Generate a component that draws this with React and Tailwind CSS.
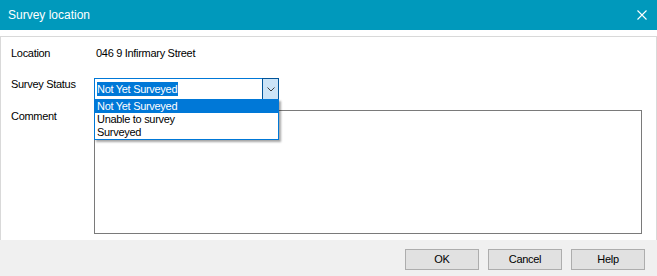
import React from "react";

export default function App() {
  const font = { fontFamily: '"Liberation Sans", Arial, sans-serif' };
  return (
    <div
      className="w-[657px] h-[276px] flex flex-col bg-white overflow-hidden text-[11px] tracking-[-0.3px] text-black"
      style={font}
    >
      {/* Title bar */}
      <div className="h-[30px] shrink-0 bg-[#0099bc] flex items-center justify-between pl-[8px] pr-[10px]">
        <span className="text-white text-[12px] tracking-normal">Survey location</span>
        <svg width="10" height="10" viewBox="0 0 10 10" className="mr-[0px]">
          <path d="M0.5 0.5 L9.5 9.5 M9.5 0.5 L0.5 9.5" stroke="white" strokeWidth="1.1" fill="none" />
        </svg>
      </div>
      <div className="h-[6px] shrink-0 bg-white" />
      {/* Content */}
      <div className="flex-1 border-t border-l border-r border-[#d9d9d9] bg-white pl-[10px] pt-[10px] flex flex-col">
        <div className="flex h-[13px] leading-[13px]">
          <div className="w-[83px]">Location</div>
          <div className="pl-[2px]">046 9 Infirmary Street</div>
        </div>
        <div className="flex mt-[18px] h-[22px]">
          <div className="w-[83px] leading-[13px]">Survey Status</div>
          <div className="relative w-[185px] h-[22px] border border-[#0078d7] bg-white flex">
            <div className="flex-1 pl-[2px] pt-[2px]">
              <span className="inline-block bg-[#0078d7] text-white leading-[14px] h-[14px] pr-[1px]">
                Not Yet Surveyed
              </span>
            </div>
            <div className="w-[17px] -mt-px -mr-px -mb-px bg-[#cce4f7] border border-[#005499] flex items-center justify-center">
              <svg width="8" height="5" viewBox="0 0 8 5">
                <path d="M0.5 0.5 L4 4 L7.5 0.5" stroke="#404040" strokeWidth="1" fill="none" />
              </svg>
            </div>
            {/* Dropdown list */}
            <div className="absolute left-[-1px] top-[20px] w-[185px] border border-[#0078d7] bg-white z-10 shadow-[2px_2px_2px_rgba(0,0,0,0.35)]">
              <div className="h-[13px] leading-[13px] bg-[#0078d7] text-white pl-[2px]">Not Yet Surveyed</div>
              <div className="h-[13px] leading-[13px] pl-[2px]">Unable to survey</div>
              <div className="h-[13px] leading-[13px] pl-[2px]">Surveyed</div>
            </div>
          </div>
        </div>
        <div className="flex mt-[10px]">
          <div className="w-[83px] leading-[13px]">Comment</div>
          <div className="w-[548px] h-[124px] border border-[#7a7a7a] bg-white" />
        </div>
      </div>
      {/* Footer */}
      <div className="h-[36px] shrink-0 bg-[#f0f0f0] flex justify-end items-start pt-[9px] pr-[12px] gap-[9px]">
        {["OK", "Cancel", "Help"].map((t) => (
          <div
            key={t}
            className="w-[74px] h-[21px] bg-[#e1e1e1] border border-[#adadad] flex items-center justify-center"
          >
            {t}
          </div>
        ))}
      </div>
    </div>
  );
}
